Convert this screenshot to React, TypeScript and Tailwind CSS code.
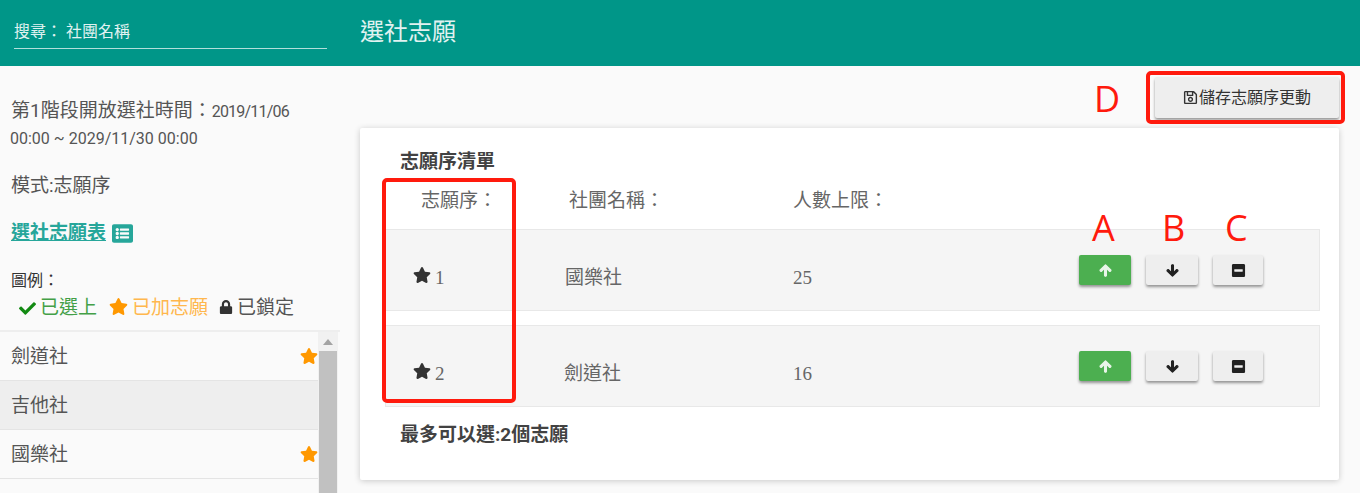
import type { ReactNode } from 'react';
import { FaArrowDown, FaArrowUp, FaCheck, FaListAlt, FaLock, FaMinusSquare, FaRegSave, FaStar } from 'react-icons/fa';

const wishes = [
  { order: 1, name: '國樂社', limit: 25, nameClass: 'ml-0 w-[228px]' },
  { order: 2, name: '劍道社', limit: 16, nameClass: '-ml-[1px] w-[229px]' },
];

const clubs = [
  { name: '劍道社', starred: true, active: false },
  { name: '吉他社', starred: false, active: true },
  { name: '國樂社', starred: true, active: false },
  { name: '', starred: false, active: false },
];

const font = "font-['Roboto','Noto_Sans_CJK_TC',sans-serif]";

const Sidebar = () => (
  <aside className="w-[340px] shrink-0 pt-[31px] text-[19px] text-[#555]">
    <p className="pl-[11px] pt-[1px] h-[28px] flex items-center whitespace-nowrap">
      第1階段開放選社時間：<span className="text-[16px] tracking-[-0.8px]">2019/11/06</span>
    </p>
    <p className="pl-[10px] h-[28px] leading-[28px] text-[16px]">00:00 ~ 2029/11/30 00:00</p>
    <p className="pl-[11px] mt-[19px] h-[28px] leading-[28px]">模式:志願序</p>
    <p className="pl-[11px] mt-[19px] h-[28px] leading-[28px] flex items-center font-bold text-[#26a69a]">
      <span className="underline">選社志願表 </span>
      <FaListAlt className="ml-[6px] text-[21px]" />
    </p>
    <p className="pl-[11px] mt-[24px] h-[20px] text-[16px] leading-[20px] text-[#333]">圖例：</p>
    <div className="pl-[19px] mt-[3px] flex items-center h-[28px]">
      <FaCheck className="text-[17px] text-[#128a12]" />
      <span className="ml-[4px] text-[#43a047]">已選上</span>
      <FaStar className="ml-[12px] -mt-[3px] text-[19px] text-[#ff9800]" />
      <span className="ml-[4px] text-[#ffb74d]">已加志願</span>
      <FaLock className="ml-[11px] -mt-[2px] text-[14px] text-[#333]" />
      <span className="ml-[4px] text-[#555]">已鎖定</span>
    </div>
    <div className="mt-[8px] flex h-[163px] overflow-hidden border-t-2 border-[#eeeeee]">
      <ul className="w-[318px] shrink-0">
        {clubs.map((club, i) => (
          <li
            key={i}
            className={`h-[49px] border-b border-[#e4e4e4] pl-[11px] flex items-center justify-between ${club.active ? 'bg-[#eeeeee]' : ''}`}
          >
            <span className="pt-[3px]">{club.name}</span>
            {club.starred && <FaStar className="text-[18px] text-[#ff9800]" />}
          </li>
        ))}
      </ul>
      <div className="w-[20px] shrink-0 bg-[#f1f1f1] flex flex-col items-center">
        <div className="h-[19px] w-full flex items-center justify-center">
          <div className="w-0 h-0 border-l-[5px] border-r-[5px] border-b-[6px] border-l-transparent border-r-transparent border-b-[#a3a3a3]" />
        </div>
        <div className="w-[18px] flex-1 bg-[#c1c1c1]" />
      </div>
    </div>
  </aside>
);

const ActionButton = ({ primary, narrow, children }: { primary?: boolean; narrow?: boolean; children: ReactNode }) => (
  <button
    className={`h-[30px] flex items-center justify-center rounded-[2px] shadow-[0_2px_3px_rgba(0,0,0,0.4)] ${narrow ? 'w-[50px]' : 'w-[52px]'} ${primary ? 'bg-[#4caf50] text-[#e8f5e9]' : 'bg-[#eeeeee] text-[#212121]'}`}
  >
    {children}
  </button>
);

const Wishes = () => (
  <section className="relative flex-1 pl-[20px] pr-[21px]">
    <div className="h-[62px] pt-[11px] flex justify-end">
      <button className="w-[184px] h-[41px] rounded-[2px] bg-[#eeeeee] shadow-[0_2px_3px_rgba(0,0,0,0.4)] flex items-center justify-center text-[16px] text-[#333]">
        <FaRegSave className="mr-[1px] text-[15px]" />
        儲存志願序更動
      </button>
    </div>
    <div className="h-[352px] rounded-[2px] bg-white shadow-[0_1px_6px_rgba(0,0,0,0.2)] pl-[25px] pr-[19px] pt-[23px]">
      <h2 className="pl-[15px] text-[19px] leading-[22px] font-bold text-[#424242]">志願序清單</h2>
      <div className="flex h-[56px] pt-[14px] leading-[28px] text-[19px] text-[#666]">
        <span className="w-[184px] pl-[36px]">志願序：</span>
        <span className="w-[224px]">社團名稱：</span>
        <span>人數上限：</span>
      </div>
      {wishes.map((wish) => (
        <div key={wish.order} className="h-[82px] mb-[14px] last:mb-0 flex bg-[#f5f5f5] border border-[#e8e8e8] text-[19px] text-[#666]">
          <div className="flex w-[693px] pt-[34px]">
            <span className="w-[179px] pl-[27px] flex items-start h-[28px]">
              <FaStar className="mt-[2px] text-[18px] text-[#333] mr-[4px]" />
              <span className="font-['Liberation_Serif'] text-[19px] leading-[28px]">{wish.order}</span>
            </span>
            <span className={`leading-[28px] ${wish.nameClass}`}>{wish.name}</span>
            <span className="font-['Liberation_Serif'] text-[19px] leading-[28px]">{wish.limit}</span>
          </div>
          <div className="flex gap-[15px] pt-[25px]">
            <ActionButton primary>
              <FaArrowUp className="text-[13px] stroke-current stroke-[40px]" />
            </ActionButton>
            <ActionButton>
              <FaArrowDown className="text-[13px] stroke-current stroke-[40px]" />
            </ActionButton>
            <ActionButton narrow>
              <FaMinusSquare className="text-[15px]" />
            </ActionButton>
          </div>
        </div>
      ))}
      <p className="pl-[15px] mt-[16px] text-[19px] leading-[24px] font-bold text-[#424242]">最多可以選:2個志願</p>
    </div>

    {/* red review marks drawn over the page */}
    <div className="absolute left-[42px] top-[112px] w-[134px] h-[225px] rounded-[5px] border-[4px] border-[#ff1a0d]" />
    <div className="absolute left-[806px] top-[5px] w-[199px] h-[53px] rounded-[5px] border-[4px] border-[#ff1a0d]" />
    <span className="absolute left-[754px] top-[8px] text-[36px] leading-[50px] text-[#ff1a0d] font-['Open_Sans']">D</span>
    <span className="absolute left-[752px] top-[137px] text-[36px] leading-[50px] text-[#ff1a0d] font-['Open_Sans']">A</span>
    <span className="absolute left-[822px] top-[137px] text-[36px] leading-[50px] text-[#ff1a0d] font-['Open_Sans']">B</span>
    <span className="absolute left-[885px] top-[137px] text-[36px] leading-[50px] text-[#ff1a0d] font-['Open_Sans']">C</span>
  </section>
);

export default function App() {
  return (
    <div className={`h-[493px] overflow-hidden bg-[#fafafa] ${font}`}>
      <header className="h-[66px] bg-[#009688] flex text-white">
        <div className="w-[360px] shrink-0 pl-[14px] pt-[20px]">
          <div className="w-[313px] h-[29px] border-b border-[#b2dfdb] text-[16px] leading-[24px] text-[#e0f2f1]">
            搜尋： 社團名稱
          </div>
        </div>
        <h1 className="text-[24px] leading-[64px] text-[#e0f2f1]">選社志願</h1>
      </header>
      <div className="flex">
        <Sidebar />
        <Wishes />
      </div>
    </div>
  );
}
